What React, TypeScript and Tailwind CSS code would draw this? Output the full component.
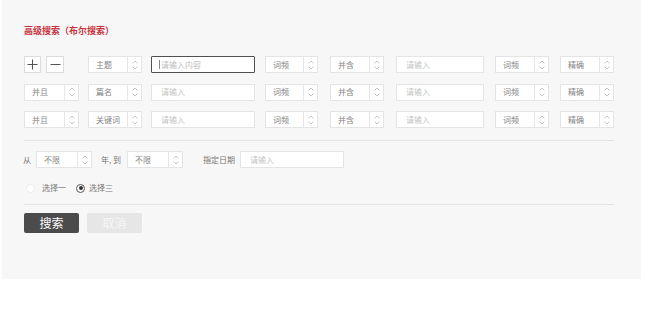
import React from "react";

const FONT = { fontFamily: '"Noto Sans CJK SC", "Noto Sans", sans-serif' };

function Spin() {
  return (
    <div className="flex w-[14px] shrink-0 flex-col items-center justify-center gap-[2px] border-l border-[#e6e6e6]">
      <svg width="6" height="4" viewBox="0 0 6 4">
        <path d="M0.6 3.4 L3 1 L5.4 3.4" stroke="#b8b8b8" strokeWidth="0.8" fill="none" />
      </svg>
      <svg width="6" height="4" viewBox="0 0 6 4">
        <path d="M0.6 0.6 L3 3 L5.4 0.6" stroke="#b8b8b8" strokeWidth="0.8" fill="none" />
      </svg>
    </div>
  );
}

function Select({ label, className }: { label: string; className: string }) {
  return (
    <div className={"flex h-[17px] shrink-0 border border-[#e4e4e4] bg-white " + className}>
      <div className="flex flex-1 items-center pl-[7px] text-[8px] leading-none text-[#858585]">{label}</div>
      <Spin />
    </div>
  );
}

function Input({ className, text = "请输入" }: { className: string; text?: string }) {
  return (
    <div className={"flex h-[17px] shrink-0 items-center border border-[#e4e4e4] bg-white pl-[9px] text-[8px] leading-none text-[#c4c4c4] " + className}>
      {text}
    </div>
  );
}

function Row({ first, second }: { first: React.ReactNode; second: string }) {
  return (
    <div className="flex h-[17px] items-center">
      <div className="flex w-[55px] shrink-0">{first}</div>
      <Select label={second} className="ml-[9px] w-[54px]" />
      <Input className="ml-[9px] w-[104px]" />
      <Select label="词频" className="ml-[10px] w-[53px]" />
      <Select label="并含" className="ml-[12px] w-[54px]" />
      <Input className="ml-[12px] w-[88px]" />
      <Select label="词频" className="ml-[11px] w-[54px]" />
      <Select label="精确" className="ml-[11px] w-[54px]" />
    </div>
  );
}

export default function App() {
  return (
    <div className="h-[320px] w-[645px] bg-white" style={FONT}>
      <div className="ml-[2px] flex h-[279px] w-[639px] flex-col bg-[#f7f7f7] pl-[22px]">
        <div className="mt-[25px] h-[12px] text-[9px] font-bold leading-[12px] text-[#c7353f]">高级搜索（布尔搜索）</div>

        <div className="mt-[19px] flex flex-col gap-[10.5px]">
          <div className="flex h-[17px] items-center">
            <div className="flex w-[55px] shrink-0 gap-[5px]">
              <div className="flex h-[17px] w-[17px] items-center justify-center border border-[#dcdcdc] bg-white">
                <svg width="11" height="11" viewBox="0 0 11 11">
                  <path d="M5.5 0.5 V10.5 M0.5 5.5 H10.5" stroke="#555" strokeWidth="1" />
                </svg>
              </div>
              <div className="flex h-[17px] w-[18px] items-center justify-center border border-[#dcdcdc] bg-white">
                <svg width="11" height="11" viewBox="0 0 11 11">
                  <path d="M0.5 5.5 H10.5" stroke="#555" strokeWidth="1" />
                </svg>
              </div>
            </div>
            <Select label="主题" className="ml-[9px] w-[54px]" />
            <div className="ml-[9px] flex h-[17px] w-[104px] shrink-0 items-center rounded-[1px] border-[1.5px] border-[#505050] bg-white pl-[7px] text-[8px] leading-none text-[#bdbdbd]">
              <span className="mr-[1px] h-[9px] w-[1px] bg-[#888]" />
              请输入内容
            </div>
            <Select label="词频" className="ml-[10px] w-[53px]" />
            <Select label="并含" className="ml-[12px] w-[54px]" />
            <Input className="ml-[12px] w-[88px]" />
            <Select label="词频" className="ml-[11px] w-[54px]" />
            <Select label="精确" className="ml-[11px] w-[54px]" />
          </div>
          <Row first={<Select label="并且" className="w-[55px]" />} second="篇名" />
          <Row first={<Select label="并且" className="w-[55px]" />} second="关键词" />
        </div>

        <div className="mt-[12px] w-[590px] border-t border-[#e4e4e4]" />

        <div className="mt-[10px] flex h-[17px] items-center text-[8px] leading-none text-[#777]">
          <span className="-ml-[1px]">从</span>
          <Select label="不限" className="ml-[5px] w-[56px]" />
          <span className="ml-[9px]">年, 到</span>
          <Select label="不限" className="ml-[6px] w-[56px]" />
          <span className="ml-[20px]">指定日期</span>
          <Input className="ml-[5px] w-[104px]" />
        </div>

        <div className="mt-[15px] flex h-[10px] items-center text-[8px] leading-none text-[#777]">
          <div className="ml-[2px] h-[9px] w-[9px] rounded-full border border-[#ececec] bg-white" />
          <span className="ml-[7px]">选择一</span>
          <div className="ml-[10px] flex h-[9px] w-[9px] items-center justify-center rounded-full border border-[#555] bg-white">
            <div className="h-[4px] w-[4px] rounded-full bg-[#333]" />
          </div>
          <span className="ml-[4px]">选择三</span>
        </div>

        <div className="mt-[11px] w-[590px] border-t border-[#e4e4e4]" />

        <div className="mt-[8px] flex gap-[8px]">
          <div className="flex h-[20px] w-[55px] items-center justify-center rounded-[2px] bg-[#4b4b4b] text-[12px] leading-none text-white">
            搜索
          </div>
          <div className="flex h-[20px] w-[55px] items-center justify-center rounded-[2px] bg-[#e6e6e6] text-[12px] leading-none text-[#f6f6f6]">
            取消
          </div>
        </div>
      </div>
    </div>
  );
}
